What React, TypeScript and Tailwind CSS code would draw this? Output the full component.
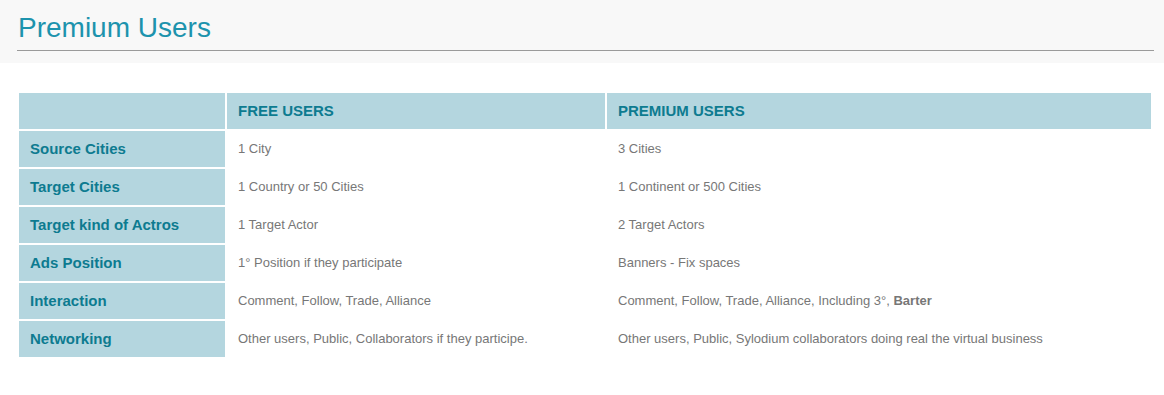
const rows: { label: string; free: string; premium: React.ReactNode }[] = [
  { label: "Source Cities", free: "1 City", premium: "3 Cities" },
  { label: "Target Cities", free: "1 Country or 50 Cities", premium: "1 Continent or 500 Cities" },
  { label: "Target kind of Actros", free: "1 Target Actor", premium: "2 Target Actors" },
  { label: "Ads Position", free: "1° Position if they participate", premium: "Banners - Fix spaces" },
  {
    label: "Interaction",
    free: "Comment, Follow, Trade, Alliance",
    premium: (
      <>
        Comment, Follow, Trade, Alliance, Including 3°, <b className="font-bold">Barter</b>
      </>
    ),
  },
  {
    label: "Networking",
    free: "Other users, Public, Collaborators if they participe.",
    premium: "Other users, Public, Sylodium collaborators doing real the virtual business",
  },
];

export default function App() {
  return (
    <div className="min-h-[395px] bg-white" style={{ fontFamily: '"Liberation Sans", Arial, sans-serif' }}>
      {/* page title band */}
      <div className="h-[63px] bg-[#f8f8f8] pl-[17px] pr-[10px] pt-[11px]">
        <h1 className="border-b border-[#9a9a9a] pb-[5px] pl-px text-[28px] leading-[34px] font-normal text-[#1d93ad]">
          Premium Users
        </h1>
      </div>

      <div className="mt-[30px] pl-[19px]">
        <div className="grid grid-cols-[206px_378px_544px] gap-[2px]">
          <div className="h-[36px] bg-[#b4d6df]" />
          <div className="flex h-[36px] items-center bg-[#b4d6df] pl-[11px] text-[15px] font-bold text-[#0d7b90]">
            FREE USERS
          </div>
          <div className="flex h-[36px] items-center bg-[#b4d6df] pl-[11px] text-[15px] font-bold text-[#0d7b90]">
            PREMIUM USERS
          </div>

          {rows.map((r) => (
            <div key={r.label} className="contents">
              <div className="flex h-[36px] items-center bg-[#b4d6df] pl-[11px] text-[15px] font-bold text-[#0d7b90]">
                {r.label}
              </div>
              <div className="flex h-[36px] items-center pl-[11px] text-[13px] text-[#777]">{r.free}</div>
              <div className="flex h-[36px] items-center pl-[11px] text-[13px] text-[#777]">
                <span>{r.premium}</span>
              </div>
            </div>
          ))}
        </div>
      </div>
    </div>
  );
}
